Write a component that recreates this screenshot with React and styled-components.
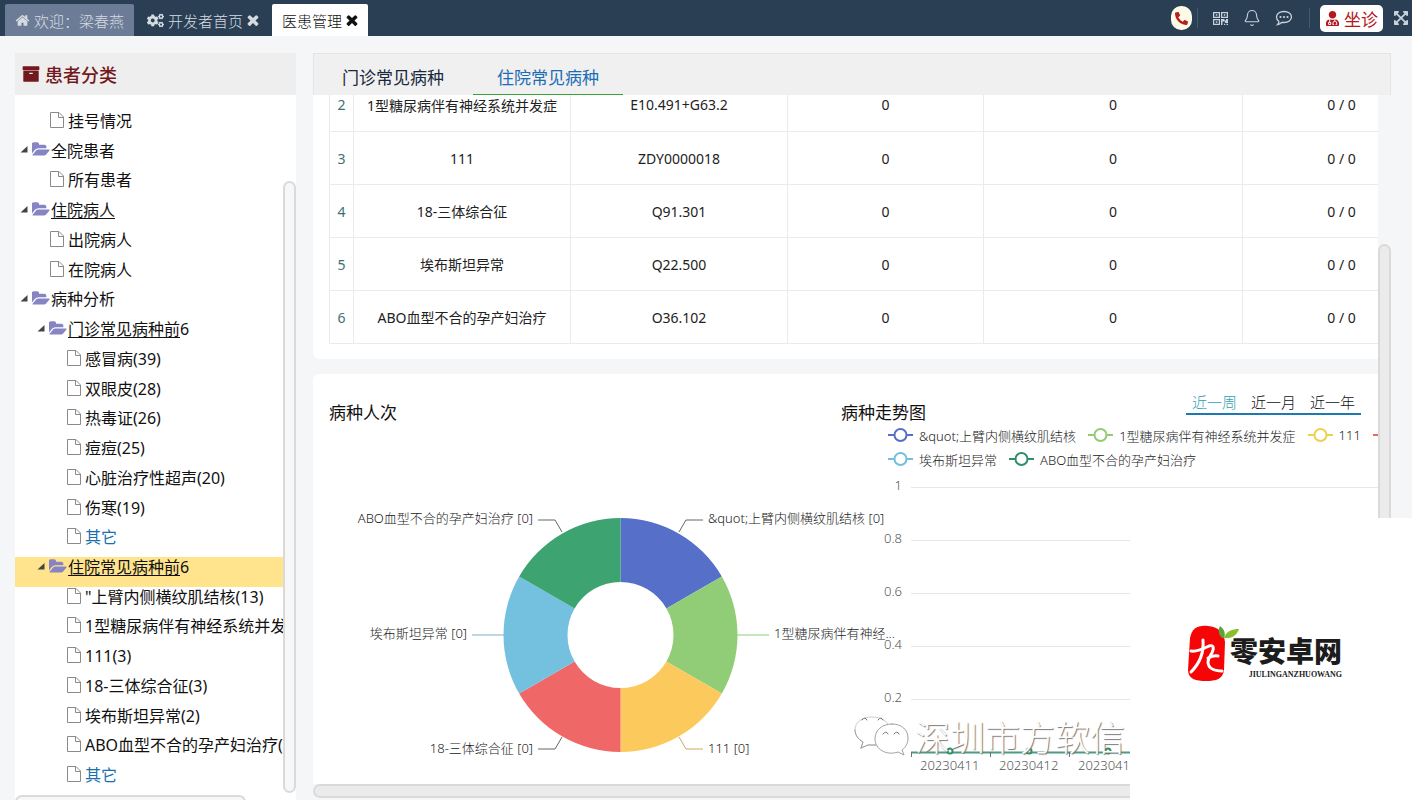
import React from 'react'
import styled, {createGlobalStyle} from 'styled-components'
import {FaCogs, FaExpandArrowsAlt, FaPhoneAlt, FaUserMd} from 'react-icons/fa'
import {Bell} from 'lucide-react'

const GlobalStyle = createGlobalStyle`
  * {
    box-sizing: border-box;
  }

  body {
    margin: 0;
    background-color: #f5f6f7;
    color: #111111;
    font-family: 'Noto Sans', 'Noto Sans CJK SC', sans-serif;
    font-size: 16px;
    font-weight: 400;
  }

  button {
    border: none;
    margin: 0;
    padding: 0;
    background: transparent;
    color: inherit;
    font: inherit;
    cursor: pointer;
  }

  ul {
    list-style: none;
    margin: 0;
    padding: 0;
  }
`

const Page = styled.div`
  position: relative;
  display: flex;
  flex-direction: column;
  height: 100vh;
  overflow: hidden;
`

const TopBar = styled.header`
  display: flex;
  align-items: flex-end;
  justify-content: space-between;
  flex: none;
  height: 36px;
  padding-left: 5px;
  background-color: #2a3f54;
`

const PageTabs = styled.nav`
  display: flex;
  gap: 3px;
`

const PageTab = styled.div`
  display: flex;
  align-items: center;
  gap: 4px;
  height: 32px;
  padding: 0 10px;
  font-size: 15px;
  font-weight: 300;
  color: ${({$active}) => ($active ? '#111111' : '#d5dbe2')};
  background-color: ${({$active, $home}) => ($active ? '#ffffff' : $home ? '#6d7c96' : 'transparent')};
  border-radius: 2px 2px 0 0;
`

const PageTabButton = styled.button`
  display: flex;
  align-items: center;
  gap: 4px;
`

const Tools = styled.div`
  display: flex;
  align-items: center;
  align-self: center;
  padding-right: 2px;
  color: #c8d2dc;
`

const ToolButton = styled.button`
  display: flex;
  align-items: center;
  justify-content: center;
  width: ${({$width}) => $width || 32}px;
  height: 30px;
`

const PhoneButton = styled(ToolButton)`
  width: 21px;
  height: 24px;
  margin-right: 5px;
  border-radius: 10px;
  background-color: #fdfbe6;
  color: #b32222;
`

const Separator = styled.span`
  width: 1px;
  height: 20px;
  margin-left: ${({$gap}) => $gap || 0}px;
  margin-right: 6px;
  background-color: #47596c;
`

const ClinicButton = styled.button`
  display: flex;
  align-items: center;
  gap: 4px;
  height: 27px;
  margin: 0 8px 0 4px;
  padding: 0 5px;
  border-radius: 5px;
  background-color: #ffffff;
  color: #b5171c;
  font-size: 17px;
`

const Body = styled.div`
  display: flex;
  flex: 1;
  gap: 17px;
  min-height: 0;
  padding: 17px 21px 0 15px;
`

const Sidebar = styled.aside`
  display: flex;
  flex-direction: column;
  flex: none;
  width: 281px;
  overflow: hidden;
  background-color: #ffffff;
`

const SidebarTitle = styled.h2`
  display: flex;
  align-items: center;
  flex: none;
  gap: 5px;
  height: 42px;
  margin: 0;
  padding: 0 7px;
  background-color: #eeeeee;
  color: #741820;
  font-size: 18px;
  font-weight: 500;
`

const SidebarContent = styled.div`
  display: flex;
  flex: 1;
  min-height: 0;
`

const Tree = styled.ul`
  display: flex;
  flex: 1;
  flex-direction: column;
  min-width: 0;
  && {
    padding-top: 16px;
  }
`

const TreeRow = styled.li`
  display: flex;
  flex: 1;
  align-items: flex-start;
  min-height: 0;
  padding-left: ${({$level}) => $level * 17}px;
  line-height: 20px;
  white-space: nowrap;
  overflow: hidden;
  background-color: ${({$selected}) => ($selected ? '#ffe48d' : 'transparent')};
`

const TreeCell = styled.span`
  display: flex;
  align-items: center;
  justify-content: ${({$center}) => ($center ? 'center' : 'flex-start')};
  flex: none;
  width: ${({$width}) => $width}px;
  height: 18px;
`

const TreeLink = styled.a`
  color: ${({$blue}) => ($blue ? '#1c6fae' : 'inherit')};
  text-decoration: ${({$underline}) => ($underline ? 'underline' : 'none')};
  text-underline-offset: 2px;
`

const VerticalTrack = styled.div`
  display: flex;
  flex: none;
  width: 13px;
  padding-top: ${({$offset}) => $offset}px;
  padding-bottom: ${({$end}) => $end || 0}px;
  background-color: ${({$plain}) => ($plain ? 'transparent' : '#ffffff')};
`

const Thumb = styled.div`
  flex: 1;
  border: 2px solid #dadada;
  border-radius: 7px;
  background-color: ${({$fill}) => $fill || '#f7f7f7'};
`

const HorizontalTrack = styled.div`
  display: flex;
  flex: none;
  height: 14px;
  margin-right: ${({$end}) => $end || 0}px;
`

const SidebarScroll = styled(HorizontalTrack)`
  margin-bottom: -9px;
`

const Main = styled.main`
  display: flex;
  flex: 1;
  flex-direction: column;
  min-width: 0;
  padding-bottom: 2px;
`

const DiseaseTabs = styled.div`
  display: flex;
  flex: none;
  gap: 5px;
  height: 42px;
  padding-left: 4px;
  border: 1px solid #e4e4e4;
  border-bottom: none;
  background-color: #f0f0f0;
`

const DiseaseTab = styled.button`
  padding: 4px 24px 0;
  border-bottom: 1px solid ${({$active}) => ($active ? '#35a535' : 'transparent')};
  color: ${({$active}) => ($active ? '#1c6db5' : '#17293d')};
  font-size: 17px;
`

const Workspace = styled.div`
  display: flex;
  flex: 1;
  min-height: 0;
`

const Content = styled.div`
  display: flex;
  flex: 1;
  flex-direction: column;
  gap: 15px;
  min-width: 0;
  overflow: hidden;
`

const TableCard = styled.section`
  flex: none;
  padding: 0 0 15px 16px;
  border-radius: 0 0 0 6px;
  background-color: #ffffff;
`

const TableViewport = styled.div`
  display: flex;
  flex-direction: column;
  justify-content: flex-end;
  height: 249px;
  overflow: hidden;
`

const Table = styled.table`
  width: 1111px;
  border-collapse: collapse;
  table-layout: fixed;
  color: #222222;
  font-size: 14px;
`

const Cell = styled.td`
  width: ${({$width}) => $width}px;
  height: 53px;
  padding: 0;
  border: 1px solid #ebebeb;
  border-top: none;
  color: ${({$index}) => ($index ? '#3f7070' : 'inherit')};
  text-align: center;
  white-space: nowrap;
`

const ChartCard = styled.section`
  display: flex;
  flex: 1;
  min-height: 0;
  padding-top: 16px;
  border-radius: 6px 0 0 0;
  background-color: #ffffff;
`

const ChartPanel = styled.div`
  display: flex;
  flex-direction: column;
  flex: ${({$width}) => ($width ? `0 0 ${$width}px` : '1')};
  min-width: 0;
`

const ChartHeader = styled.div`
  display: flex;
  justify-content: space-between;
  align-items: flex-start;
  flex: none;
  height: 33px;
  padding: 0 17px 0 16px;
`

const ChartTitle = styled.h3`
  margin: 0;
  padding-top: 12px;
  font-size: 17px;
  font-weight: 400;
  line-height: 22px;
`

const RangeTabs = styled.div`
  display: flex;
  gap: 2px;
  border-bottom: 2px solid #1d79b4;
`

const RangeTab = styled.button`
  height: 23px;
  padding: 0 6px;
  color: ${({$active}) => ($active ? '#2f9fb0' : 'inherit')};
  font-size: 15px;
  font-weight: 300;
  line-height: 20px;
`

const Legend = styled.div`
  flex: none;
  padding-left: 63px;
`

const LegendRow = styled.ul`
  display: flex;
  gap: 12px;
  height: 24px;
`

const LegendItem = styled.li`
  display: flex;
  flex: none;
  align-items: center;
  gap: 6px;
  color: #222222;
  font-size: 13px;
  font-weight: 300;
  white-space: nowrap;
`

const ChartSvg = styled.svg`
  display: block;
  flex: none;
  overflow: visible;
  font-size: 13px;
  font-weight: 300;
  fill: ${({$color}) => $color};
`

const Watermark = styled.text`
  font-size: 35px;
  fill: #ffffff;
  text-shadow: 1px 1px 1px #777777;
`

// Advert box in the bottom right corner, over everything else
const Badge = styled.div`
  position: absolute;
  right: 0;
  bottom: 0;
  display: flex;
  align-items: center;
  justify-content: center;
  width: 282px;
  height: 282px;
  padding-right: 14px;
  padding-bottom: 12px;
  background-color: #ffffff;
`

const BadgeText = styled.div`
  display: flex;
  flex-direction: column;
  align-items: flex-end;
  padding-top: 12px;
`

const BadgeName = styled.strong`
  color: #1c1c1c;
  font-size: 28px;
  font-weight: 900;
  line-height: 32px;
`

const BadgeLatin = styled.span`
  color: #1c1c1c;
  font-family: 'Liberation Serif', serif;
  font-size: 8px;
  font-weight: 700;
  line-height: 16px;
`

const Seal = styled.svg`
  overflow: visible;
`

const HomeIcon = () => (
    <svg width="15" height="15" viewBox="0 0 1792 1792" fill="currentColor">
        <path d="M1472 992v480q0 26-19 45t-45 19h-384v-384h-256v384h-384q-26 0-45-19t-19-45v-480q0-1 .5-3t.5-3l575-474 575 474q1 2 1 6zm223-69l-62 74q-8 9-21 11h-3q-13 0-21-7l-692-577-692 577q-12 8-24 7-13-2-21-11l-62-74q-8-10-7-23.5t11-21.5l719-599q32-26 76-26t76 26l244 204v-195q0-14 9-23t23-9h192q14 0 23 9t9 23v408l219 182q10 8 11 21.5t-7 23.5z" />
    </svg>
)

const CloseIcon = () => (
    <svg width="12" height="12" viewBox="240 240 1312 1312" fill="currentColor">
        <path d="M1490 1322q0 40-28 68l-136 136q-28 28-68 28t-68-28l-294-294-294 294q-28 28-68 28t-68-28l-136-136q-28-28-28-68t28-68l294-294-294-294q-28-28-28-68t28-68l136-136q28-28 68-28t68 28l294 294 294-294q28-28 68-28t68 28l136 136q28 28 28 68t-28 68l-294 294 294 294q28 28 28 68z" />
    </svg>
)

const ArchiveIcon = () => (
    <svg width="18" height="18" viewBox="0 0 1792 1792" fill="currentColor">
        <path d="M1088 832q0-26-19-45t-45-19h-256q-26 0-45 19t-19 45 19 45 45 19h256q26 0 45-19t19-45zm576-192v960q0 26-19 45t-45 19h-1408q-26 0-45-19t-19-45v-960q0-26 19-45t45-19h1408q26 0 45 19t19 45zm64-448v256q0 26-19 45t-45 19h-1536q-26 0-45-19t-19-45v-256q0-26 19-45t45-19h1536q26 0 45 19t19 45z" />
    </svg>
)

const FolderIcon = () => (
    <svg width="18" height="17" viewBox="0 0 1815 1792" fill="#8684c2">
        <path d="M1815 952q0 31-31 66l-336 396q-43 51-120.5 86.5t-143.5 35.5h-1088q-34 0-60.5-13t-26.5-43q0-31 31-66l336-396q43-51 120.5-86.5t143.5-35.5h1088q34 0 60.5 13t26.5 43zm-343-344v160h-832q-94 0-197 47.5t-164 119.5l-337 396-5 6q0-4-.5-12.5t-.5-12.5v-960q0-92 66-158t158-66h320q92 0 158 66t66 158v32h544q92 0 158 66t66 158z" />
    </svg>
)

const FileIcon = () => (
    <svg width="16" height="18" viewBox="0 0 16 18" fill="none" stroke="#8a8a8a">
        <path d="M1.5 1.5h8.500l4.500 4.500v10.500h-13zM9.500 1.500v5h5" />
    </svg>
)

const ArrowIcon = () => (
    <svg width="8" height="7" viewBox="0 0 8 7" fill="#444444">
        <path d="M7.500 0v6.500h-7z" />
    </svg>
)

const QrIcon = () => (
    <svg width="15" height="15" viewBox="0 0 15 15" fill="currentColor">
        <path fillRule="evenodd" d="M0 1h7v6H0zM1.200 2.200v3.600h4.600V2.200zM8 1h7v6H8zM9.200 2.200v3.600h4.600V2.200zM0 8h7v6H0zM1.200 9.200v3.600h4.600V9.200z" />
        <path d="M2.800 3.200h1.500v1.600H2.800zM10.800 3.200h1.500v1.600h-1.500zM2.800 10.200h1.500v1.600H2.800zM8 8h3.500v1.500h1.500V8h2v4h-3v-1.500H9.500V14H8zM11 12.800h1.200V14H11zM13.500 12.800H15V14h-1.500z" />
    </svg>
)

const ChatIcon = () => (
    <svg width="18" height="17" viewBox="0 0 18 17" fill="none" stroke="currentColor" strokeWidth="1.300">
        <path d="M9 1.500c4.300 0 7.500 2.400 7.500 5.500s-3.200 5.500-7.500 5.500c-.7 0-1.400-.1-2-.2-1.200 1.100-2.700 2.100-4.500 2.400.8-.9 1.300-2 1.400-3.200C2.400 10.500 1.500 8.900 1.500 7c0-3.100 3.200-5.500 7.500-5.500z" />
        <g fill="currentColor" stroke="none">
            <circle cx="5.500" cy="7" r="1.100" />
            <circle cx="9" cy="7" r="1.100" />
            <circle cx="12.500" cy="7" r="1.100" />
        </g>
    </svg>
)

const LegendIcon = ({color}) => (
    <svg width="25" height="14" viewBox="0 0 25 14" fill="#ffffff" stroke={color} strokeWidth="2">
        <path d="M0 7h25" />
        <circle cx="12.500" cy="7" r="6" />
    </svg>
)

const treeItems = [
    {level: 1, label: '挂号情况'},
    {level: 0, label: '全院患者', folder: true},
    {level: 1, label: '所有患者'},
    {level: 0, label: '住院病人', folder: true, underline: true},
    {level: 1, label: '出院病人'},
    {level: 1, label: '在院病人'},
    {level: 0, label: '病种分析', folder: true},
    {level: 1, label: '门诊常见病种前', suffix: '6', folder: true, underline: true},
    {level: 2, label: '感冒病(39)'},
    {level: 2, label: '双眼皮(28)'},
    {level: 2, label: '热毒证(26)'},
    {level: 2, label: '痘痘(25)'},
    {level: 2, label: '心脏治疗性超声(20)'},
    {level: 2, label: '伤寒(19)'},
    {level: 2, label: '其它', blue: true},
    {level: 1, label: '住院常见病种前', suffix: '6', folder: true, underline: true, selected: true},
    {level: 2, label: '"上臂内侧横纹肌结核(13)'},
    {level: 2, label: '1型糖尿病伴有神经系统并发'},
    {level: 2, label: '111(3)'},
    {level: 2, label: '18-三体综合征(3)'},
    {level: 2, label: '埃布斯坦异常(2)'},
    {level: 2, label: 'ABO血型不合的孕产妇治疗('},
    {level: 2, label: '其它', blue: true},
]

const columnWidths = [24, 217, 217, 196, 259, 198]

const tableRows = [
    ['2', '1型糖尿病伴有神经系统并发症', 'E10.491+G63.2', '0', '0', '0 / 0'],
    ['3', '111', 'ZDY0000018', '0', '0', '0 / 0'],
    ['4', '18-三体综合征', 'Q91.301', '0', '0', '0 / 0'],
    ['5', '埃布斯坦异常', 'Q22.500', '0', '0', '0 / 0'],
    ['6', 'ABO血型不合的孕产妇治疗', 'O36.102', '0', '0', '0 / 0'],
]

const legendRows = [
    [
        {label: '&quot;上臂内侧横纹肌结核', color: '#5470c6'},
        {label: '1型糖尿病伴有神经系统并发症', color: '#91cc75'},
        {label: '111', color: '#eed04f'},
        {label: '', color: '#ee6666'},
    ],
    [
        {label: '埃布斯坦异常', color: '#73c0de'},
        {label: 'ABO血型不合的孕产妇治疗', color: '#2f8f69'},
    ],
]

const slices = [
    {label: '&quot;上臂内侧横纹肌结核 [0]', color: '#566fc8', line: '#666666', x: 395, y: 96, points: '366,109 373,97 390,97'},
    {label: '1型糖尿病伴有神经...', color: '#91cd76', line: '#91cc75', x: 461, y: 211, points: '424,212 456,212'},
    {label: '111 [0]', color: '#fbc95c', line: '#c9ab5c', x: 395, y: 326, points: '366,314 373,326 390,326'},
    {label: '18-三体综合征 [0]', color: '#f06768', line: '#666666', x: 220, y: 326, end: true, points: '249,314 242,326 225,326'},
    {label: '埃布斯坦异常 [0]', color: '#74c1df', line: '#7fb0c0', x: 154, y: 211, end: true, points: '191,212 159,212'},
    {label: 'ABO血型不合的孕产妇治疗 [0]', color: '#3ca371', line: '#666666', x: 220, y: 96, end: true, points: '249,109 242,97 225,97'},
]

const CX = 307.5
const CY = 212
const OUTER = 117
const INNER = 53

const polar = (radius, angle) => {
    const rad = ((angle - 90) * Math.PI) / 180
    return `${CX + radius * Math.cos(rad)} ${CY + radius * Math.sin(rad)}`
}

const slicePath = (index) => {
    const from = index * 60
    const to = from + 60
    return `M${polar(OUTER, from)}A${OUTER} ${OUTER} 0 0 1 ${polar(OUTER, to)}L${polar(INNER, to)}A${INNER} ${INNER} 0 0 0 ${polar(INNER, from)}Z`
}

const PieChart = () => (
    <ChartSvg $color="#222222" width="512" height="361">
        {slices.map((slice, i) => (
            <g key={slice.label}>
                <path d={slicePath(i)} fill={slice.color} />
                <polyline points={slice.points} fill="none" stroke={slice.line} />
                <text x={slice.x} y={slice.y + 4} textAnchor={slice.end ? 'end' : 'start'}>
                    {slice.label}
                </text>
            </g>
        ))}
    </ChartSvg>
)

const yLabels = ['1', '0.8', '0.6', '0.4', '0.2']
const dates = ['20230411', '20230412', '2023041']

const TrendChart = () => (
    <ChartSvg $color="#555555" width="552" height="313">
        {yLabels.map((label, i) => (
            <g key={label}>
                <path d={`M86 ${16.5 + i * 53}h467`} stroke="#e4e6ec" />
                <text x="77" y={19 + i * 53} textAnchor="end">{label}</text>
            </g>
        ))}
        <path d="M86 281.500h467" stroke="#4e9a83" strokeWidth="2" />
        {dates.map((date, i) => (
            <g key={date}>
                <path d={`M${86.5 + i * 79} 281v5`} stroke="#6e7079" />
                <circle cx={125 + i * 79} cy="280" r="2.500" fill="#ffffff" stroke="#2f8f69" strokeWidth="2" />
                <text x={95 + i * 79} y="299">{date}</text>
            </g>
        ))}
        <g fill="#ffffff" stroke="#a0a0a0" strokeLinecap="round">
            <path d="M51 274h-8l-7 3 2-6c-5-3-8-7-8-12 0-8 7-13 17-13s17 5 18 12" stroke="#cccccc" />
            <path d="M36 277l2-6c-5-3-8-7-8-12M36 277l7-3h8" fill="none" />
            <path d="M67 253c10 0 16 6 16 14 0 5-2 9-6 12l2 5-6-3c-12 4-23-3-23-13 0-9 7-15 17-15z" />
            <path d="M37 249q3-4 5 0M53 249q3-4 5 0M58 263q3-4 5 0M69 263q3-4 5 0" fill="none" stroke="#777777" />
        </g>
        <Watermark x="90" y="280">深圳市方软信</Watermark>
    </ChartSvg>
)

const TreeNode = ({item}) => (
    <TreeRow $level={item.level} $selected={item.selected}>
        <TreeCell $width={17} $center>{item.folder && <ArrowIcon />}</TreeCell>
        <TreeCell $width={19}>{item.folder ? <FolderIcon /> : <FileIcon />}</TreeCell>
        <TreeLink href="#" $underline={item.underline} $blue={item.blue}>{item.label}</TreeLink>
        {item.suffix}
    </TreeRow>
)

const SiteBadge = () => (
    <Badge>
        <Seal width="44" height="60" viewBox="0 0 44 60">
            <path d="M4 15C6 5 12 2 22 3s16 6 17 16l-1 28c-1 9-8 11-18 11S2 56 2 47z" fill="#f50505" />
            <g fill="none" stroke="#ffffff" strokeWidth="3" strokeLinecap="round" strokeLinejoin="round">
                <path d="M5 28c6 1 12-2 18-5 3-1 5 0 4 4-1 5-5 7-5 12 0 6 6 9 14 9" />
                <path d="M17 17c1 12-2 22-12 32M22 35c4-2 7-3 10-2" />
            </g>
            <path d="M36 15C32 11 32 7 34 3c4 3 6 7 4 12z" fill="#5ba23b" />
            <path d="M38 15c2-7 8-9 15-9-2 6-7 10-15 9z" fill="#8abf2e" />
        </Seal>
        <BadgeText>
            <BadgeName>零安卓网</BadgeName>
            <BadgeLatin>JIULINGANZHUOWANG</BadgeLatin>
        </BadgeText>
    </Badge>
)

const App = () => (
    <Page>
        <GlobalStyle />
        <TopBar>
            <PageTabs>
                <PageTab $home>
                    <PageTabButton><HomeIcon />欢迎：梁春燕</PageTabButton>
                </PageTab>
                <PageTab>
                    <PageTabButton><FaCogs size={17} />开发者首页</PageTabButton>
                    <PageTabButton aria-label="关闭"><CloseIcon /></PageTabButton>
                </PageTab>
                <PageTab $active>
                    <PageTabButton>医患管理</PageTabButton>
                    <PageTabButton aria-label="关闭"><CloseIcon /></PageTabButton>
                </PageTab>
            </PageTabs>
            <Tools>
                <PhoneButton aria-label="电话"><FaPhoneAlt size={13} /></PhoneButton>
                <Separator />
                <ToolButton aria-label="二维码"><QrIcon /></ToolButton>
                <ToolButton aria-label="通知"><Bell size={18} strokeWidth={1.5} /></ToolButton>
                <ToolButton aria-label="消息"><ChatIcon /></ToolButton>
                <Separator $gap={9} />
                <ClinicButton><FaUserMd size={15} />坐诊</ClinicButton>
                <ToolButton $width={19} aria-label="全屏"><FaExpandArrowsAlt size={16} /></ToolButton>
            </Tools>
        </TopBar>

        <Body>
            <Sidebar>
                <SidebarTitle><ArchiveIcon />患者分类</SidebarTitle>
                <SidebarContent>
                    <Tree>
                        {treeItems.map((item, i) => (
                            <TreeNode key={i} item={item} />
                        ))}
                    </Tree>
                    <VerticalTrack $offset={86} $end={2}>
                        <Thumb />
                    </VerticalTrack>
                </SidebarContent>
                <SidebarScroll $end={50}><Thumb /></SidebarScroll>
            </Sidebar>

            <Main>
                <DiseaseTabs>
                    <DiseaseTab>门诊常见病种</DiseaseTab>
                    <DiseaseTab $active>住院常见病种</DiseaseTab>
                </DiseaseTabs>
                <Workspace>
                    <Content>
                        <TableCard>
                            <TableViewport>
                                <Table>
                                    <tbody>
                                        {tableRows.map((row) => (
                                            <tr key={row[0]}>
                                                {row.map((value, i) => (
                                                    <Cell key={i} $width={columnWidths[i]} $index={i === 0}>{value}</Cell>
                                                ))}
                                            </tr>
                                        ))}
                                    </tbody>
                                </Table>
                            </TableViewport>
                        </TableCard>
                        <ChartCard>
                            <ChartPanel $width={512}>
                                <ChartHeader>
                                    <ChartTitle>病种人次</ChartTitle>
                                </ChartHeader>
                                <PieChart />
                            </ChartPanel>
                            <ChartPanel>
                                <ChartHeader>
                                    <ChartTitle>病种走势图</ChartTitle>
                                    <RangeTabs>
                                        <RangeTab $active>近一周</RangeTab>
                                        <RangeTab>近一月</RangeTab>
                                        <RangeTab>近一年</RangeTab>
                                    </RangeTabs>
                                </ChartHeader>
                                <Legend>
                                    {legendRows.map((items, i) => (
                                        <LegendRow key={i}>
                                            {items.map((item) => (
                                                <LegendItem key={item.color}>
                                                    <LegendIcon color={item.color} />
                                                    {item.label}
                                                </LegendItem>
                                            ))}
                                        </LegendRow>
                                    ))}
                                </Legend>
                                <TrendChart />
                            </ChartPanel>
                        </ChartCard>
                    </Content>
                    <VerticalTrack $offset={149} $plain>
                        <Thumb $fill="#ebebeb" />
                    </VerticalTrack>
                </Workspace>
                <HorizontalTrack>
                    <Thumb $fill="#ebebeb" />
                </HorizontalTrack>
            </Main>
        </Body>

        <SiteBadge />
    </Page>
)

export default App
